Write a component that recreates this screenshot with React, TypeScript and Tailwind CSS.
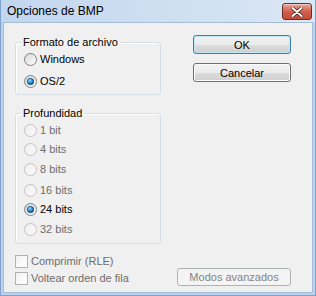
import React from "react";

const FONT = { fontFamily: "'Liberation Sans', Arial, sans-serif" };

function Radio({ checked, disabled }: { checked?: boolean; disabled?: boolean }) {
  const id = `${checked ? "c" : "u"}${disabled ? "d" : "e"}`;
  return (
    <svg width="13" height="13" viewBox="0 0 13 13" className="shrink-0">
      <defs>
        <linearGradient id={`rg${id}`} x1="0" y1="0" x2="1" y2="1">
          <stop offset="0" stopColor={disabled ? "#eeeeee" : "#d9d9d9"} />
          <stop offset="1" stopColor={disabled ? "#fbfbfb" : "#ffffff"} />
        </linearGradient>
        <radialGradient id={`rd${id}`} cx="0.4" cy="0.35" r="0.7">
          <stop offset="0" stopColor="#9fd8ff" />
          <stop offset="0.5" stopColor="#2b8fd0" />
          <stop offset="1" stopColor="#0d3f6b" />
        </radialGradient>
      </defs>
      <circle cx="6.5" cy="6.5" r="6" fill={`url(#rg${id})`} stroke={disabled ? "#c2c2c2" : "#7f7f7f"} strokeWidth="1" />
      {checked && <circle cx="6.5" cy="6.5" r="3.3" fill={`url(#rd${id})`} stroke="#1c4a72" strokeWidth="0.6" />}
    </svg>
  );
}

function RadioRow({ label, checked, disabled, className = "" }: { label: string; checked?: boolean; disabled?: boolean; className?: string }) {
  return (
    <div className={`flex h-4 items-center gap-[3px] pl-[8px] ${className}`}>
      <Radio checked={checked} disabled={disabled} />
      <span className={disabled ? "text-[#6d6d6d]" : "text-black"}>{label}</span>
    </div>
  );
}

function CheckRow({ label }: { label: string }) {
  return (
    <div className="flex h-4 items-center gap-[3px]">
      <span className="box-border h-[13px] w-[13px] shrink-0 border border-[#b1b1b1] bg-gradient-to-br from-[#f2f2f2] to-[#ffffff]" />
      <span className="text-[#6d6d6d]">{label}</span>
    </div>
  );
}

function Group({ title, children, className = "" }: { title: string; children: React.ReactNode; className?: string }) {
  return (
    <fieldset className={`box-border w-[146px] rounded-[3px] border border-[#d5dfe5] shadow-[inset_1px_1px_0_#ffffff] ${className}`}>
      <legend className="ml-[5px] h-4 px-[2px] leading-4 text-black">{title}</legend>
      {children}
    </fieldset>
  );
}

function CloseButton() {
  return (
    <div className="box-border flex h-[17px] w-[30px] items-center justify-center rounded-[3px] border border-[#6e2d25] bg-gradient-to-b from-[#e8a898] via-[#d2604c] to-[#c44a36] shadow-[inset_0_1px_0_rgba(255,255,255,0.45)]">
      <svg width="12" height="10" viewBox="0 0 12 10">
        <path d="M1.5 1 L10.5 9 M10.5 1 L1.5 9" stroke="#4a2520" strokeWidth="3.6" strokeLinecap="round" />
        <path d="M1.5 1 L10.5 9 M10.5 1 L1.5 9" stroke="#ffffff" strokeWidth="2" strokeLinecap="round" />
      </svg>
    </div>
  );
}

export default function App() {
  return (
    <div style={FONT} className="box-border h-[296px] w-[316px] bg-[#bcd2ec] text-[11px] leading-4">
      <div className="box-border flex h-full w-full flex-col border-x border-b border-[#7fa3cc]">
        {/* title bar */}
        <div className="flex h-[22px] shrink-0 items-start justify-between bg-gradient-to-r from-[#c2d6ee] to-[#dae7f5] pl-[6px] pr-[3px]">
          <span className="mt-[3px] text-[12px] leading-4 text-black">Opciones de BMP</span>
          <div className="mt-[3px]">
            <CloseButton />
          </div>
        </div>
        {/* client area */}
        <div className="mx-[2px] mb-[2px] flex flex-1 flex-col border border-[#a6bdd8] bg-[#f0f0f0]">
          <div className="flex flex-1 pl-[11px] pt-[11px]">
            <div className="flex flex-col">
              <Group title="Formato de archivo" className="h-[61px] pb-[4px]">
                <RadioRow label="Windows" className="mt-[1px]" />
                <RadioRow label="OS/2" checked className="mt-[6px]" />
              </Group>
              <Group title="Profundidad" className="mt-[10px] h-[139px]">
                <RadioRow label="1 bit" disabled className="mt-[1px]" />
                <RadioRow label="4 bits" disabled className="mt-[3px]" />
                <RadioRow label="8 bits" disabled className="mt-[4px]" />
                <RadioRow label="16 bits" disabled className="mt-[5px]" />
                <RadioRow label="24 bits" checked className="mt-[3px]" />
                <RadioRow label="32 bits" disabled className="mt-[4px]" />
              </Group>
            </div>
            <div className="ml-[32px] mt-[1px] flex flex-col">
              <button className="box-border h-[19px] w-[98px] rounded-[3px] border border-[#3c7fb1] bg-[linear-gradient(#f2f2f2_0%,#ebebeb_50%,#dddddd_51%,#cfcfcf_100%)] leading-4 text-black shadow-[inset_0_0_0_1px_#c4e5f6]">
                OK
              </button>
              <button className="mt-[9px] box-border h-[19px] w-[98px] rounded-[3px] border border-[#707070] bg-[linear-gradient(#f2f2f2_0%,#ebebeb_50%,#dddddd_51%,#cfcfcf_100%)] leading-4 text-black shadow-[inset_0_0_0_1px_#fcfcfc]">
                Cancelar
              </button>
            </div>
          </div>
          <div className="flex items-end justify-between pb-[6px] pl-[11px] pr-[21px]">
            <div className="flex flex-col gap-[1px]">
              <CheckRow label="Comprimir (RLE)" />
              <CheckRow label="Voltear orden de fila" />
            </div>
            <button className="box-border h-[18px] w-[114px] rounded-[3px] border border-[#adb2b5] bg-[#f4f4f4] leading-4 text-[#838383]">
              Modos avanzados
            </button>
          </div>
        </div>
      </div>
    </div>
  );
}
